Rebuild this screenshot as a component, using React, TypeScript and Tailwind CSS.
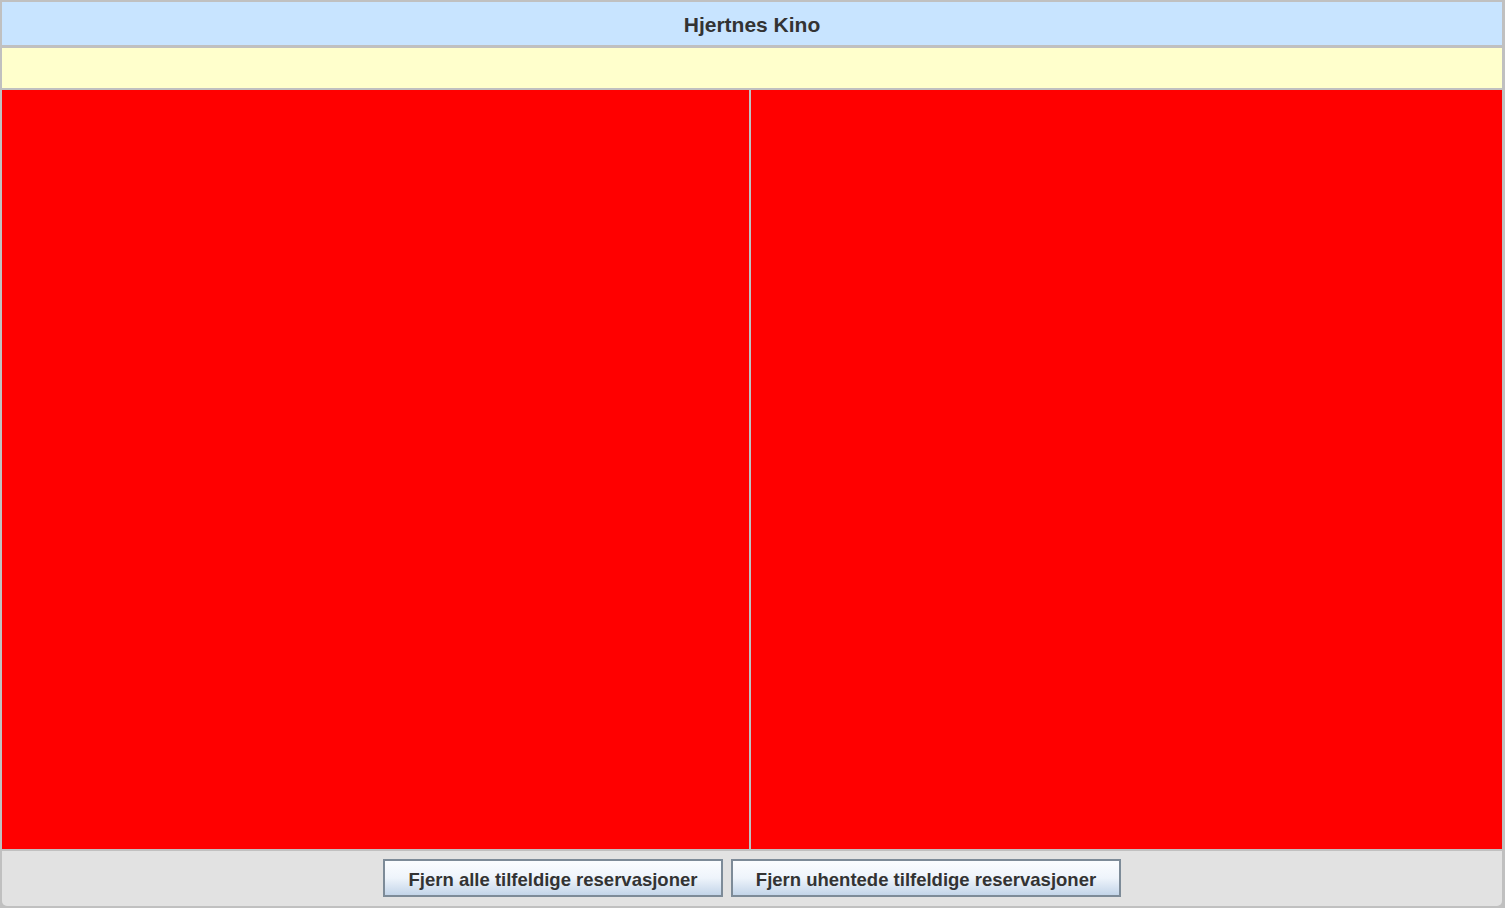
import React from 'react';

const App: React.FC = () => {
  return (
    <div
      className="w-[1505px] h-[908px] bg-[#c0c0c0] overflow-hidden"
      style={{ fontFamily: '"Liberation Sans", Arial, sans-serif' }}
    >
      <div className="flex flex-col h-full border-t-2 border-l-2 border-r-[3px] border-b-2 border-[#c0c0c0] rounded-b-[6px] bg-[#c0c0c0]">
        <div className="h-[43px] shrink-0 bg-[#c8e4ff] flex items-center justify-center pt-[2px]">
          <h1 className="text-[21px] font-bold text-[#333333]">Hjertnes Kino</h1>
        </div>
        <div className="h-[40px] shrink-0 mt-[3px] bg-[#ffffcc]"></div>
        <div className="flex-1 mt-[2px] flex gap-[2px]">
          <div className="w-[747px] bg-[#ff0000]"></div>
          <div className="flex-1 bg-[#ff0000]"></div>
        </div>
        <div className="h-[55px] shrink-0 mt-[2px] bg-[#e2e2e2] rounded-b-[5px] flex justify-center items-start pt-2 gap-2">
          <button className="w-[340px] h-[38px] pt-[3px] border-2 border-[#7d8b98] bg-gradient-to-b from-[#fbfdff] via-[#eef4fb] to-[#c3d5e9] text-[18.5px] font-bold text-[#333333]">
            Fjern alle tilfeldige reservasjoner
          </button>
          <button className="w-[390px] h-[38px] pt-[3px] border-2 border-[#7d8b98] bg-gradient-to-b from-[#fbfdff] via-[#eef4fb] to-[#c3d5e9] text-[18.5px] font-bold text-[#333333]">
            Fjern uhentede tilfeldige reservasjoner
          </button>
        </div>
      </div>
    </div>
  );
};

export default App;
